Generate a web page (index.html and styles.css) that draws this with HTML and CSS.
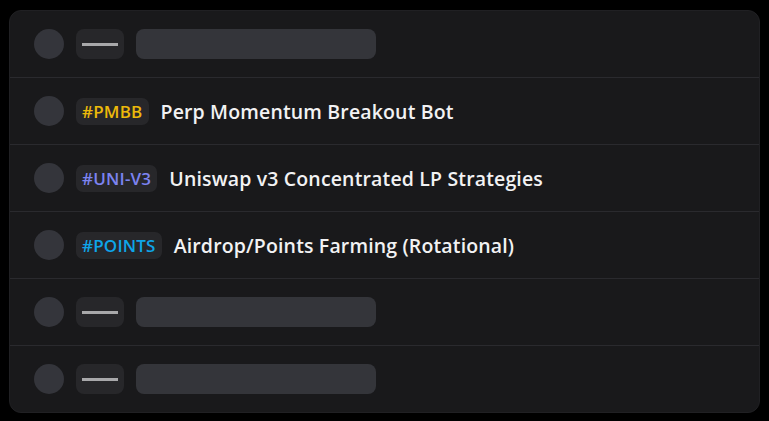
FILE: index.html
```html
<!DOCTYPE html>
<html>
<head>
<meta charset="utf-8">
<link rel="stylesheet" href="styles.css">
</head>
<body>
<div class="card">
  <div class="row">
    <span class="avatar"></span>
    <span class="tag tag-empty"><span class="dash"></span></span>
    <span class="title-empty"></span>
  </div>
  <div class="row">
    <span class="avatar"></span>
    <span class="tag tag-yellow">#PMBB</span>
    <span class="title">Perp Momentum Breakout Bot</span>
  </div>
  <div class="row">
    <span class="avatar"></span>
    <span class="tag tag-indigo">#UNI-V3</span>
    <span class="title">Uniswap v3 Concentrated LP Strategies</span>
  </div>
  <div class="row">
    <span class="avatar"></span>
    <span class="tag tag-sky">#POINTS</span>
    <span class="title">Airdrop/Points Farming (Rotational)</span>
  </div>
  <div class="row">
    <span class="avatar"></span>
    <span class="tag tag-empty"><span class="dash"></span></span>
    <span class="title-empty"></span>
  </div>
  <div class="row">
    <span class="avatar"></span>
    <span class="tag tag-empty"><span class="dash"></span></span>
    <span class="title-empty"></span>
  </div>
</div>
</body>
</html>
```
FILE: styles.css
```css
html, body {
  margin: 0;
  padding: 0;
  background: #000;
}
body {
  padding: 10px 9px 8px 9px;
  font-family: "Open Sans", "Noto Sans", sans-serif;
}
.card {
  background: #19191b;
  border: 1px solid #202023;
  border-radius: 12px;
  overflow: hidden;
}
.row {
  display: flex;
  align-items: center;
  gap: 12px;
  height: 66px;
  padding: 0 24px;
  border-top: 1px solid #2a2a2e;
}
.row:first-child {
  border-top: none;
}
.avatar {
  width: 30px;
  height: 30px;
  border-radius: 50%;
  background: #34353b;
  flex: none;
}
.tag {
  display: flex;
  align-items: center;
  height: 27px;
  padding: 0 6px;
  border-radius: 7px;
  background: #27272a;
  font-size: 17px;
  font-weight: 600;
  letter-spacing: 0.2px;
}
.tag-empty {
  width: 48px;
  height: 30px;
  padding: 0;
  justify-content: center;
  border-radius: 8px;
  box-sizing: border-box;
}
.dash {
  width: 36px;
  height: 3px;
  background: #a8a8aa;
}
.title-empty {
  width: 240px;
  height: 30px;
  border-radius: 8px;
  background: #34353a;
}
.tag-yellow { color: #ecb90a; }
.tag-indigo { color: #7c83f0; }
.tag-sky { color: #0ea5e9; }
.title {
  color: #f2f2f3;
  font-size: 19.5px;
  font-weight: 600;
  letter-spacing: 0.15px;
}
```
